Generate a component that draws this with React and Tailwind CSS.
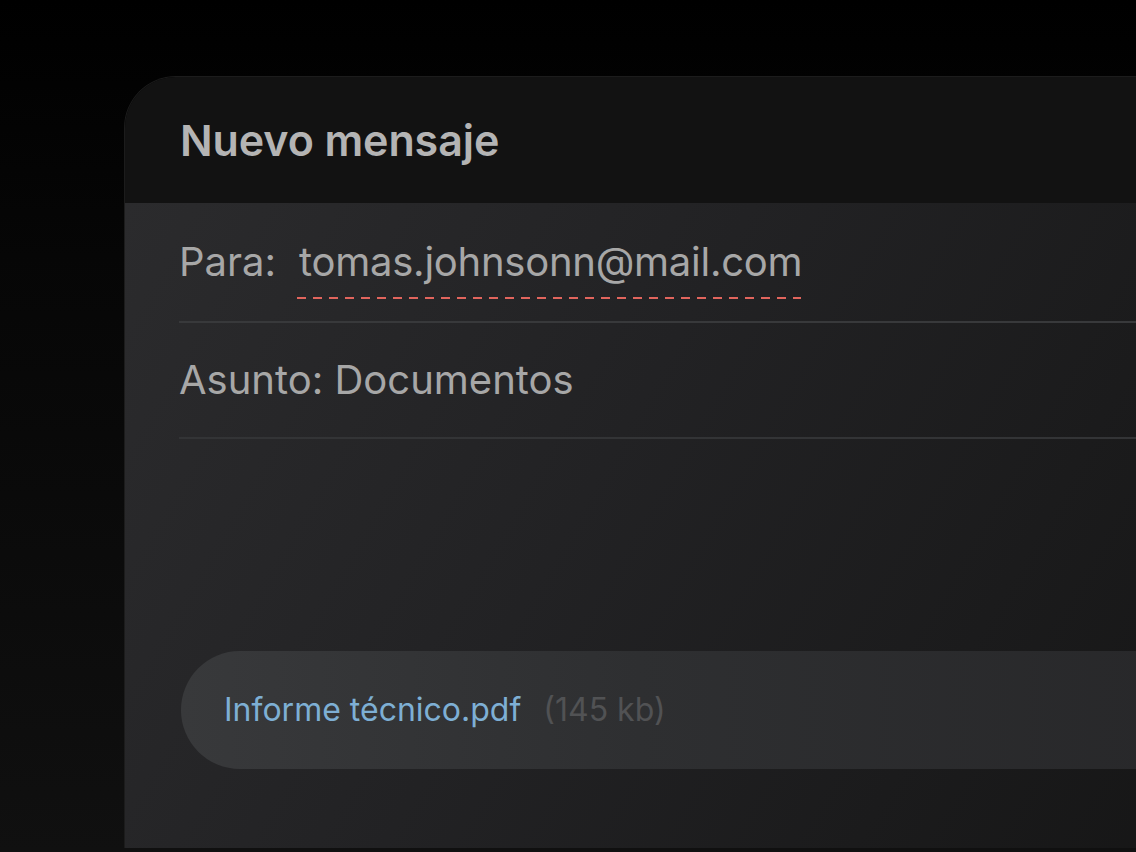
export default function App() {
  const font = { fontFamily: 'Inter, "Noto Sans", sans-serif' };
  return (
    <div
      className="w-full h-[852px] overflow-hidden bg-[linear-gradient(180deg,#000000_0%,#060606_30%,#101010_100%)] pt-[76px] pl-[124px]"
      style={font}
    >
      <div className="w-[1200px] h-[772px] rounded-tl-[52px] rounded-tr-[52px] overflow-hidden border-t border-l border-[#1c1c1c] flex flex-col">
        <div className="h-[126px] shrink-0 bg-[#121212] flex items-center pl-[55px]">
          <h1 className="text-[43px] font-semibold text-[#b4b4b4] tracking-[-0.1px] leading-none">
            Nuevo mensaje
          </h1>
        </div>
        <div className="flex-1 bg-[linear-gradient(120deg,#2b2b2d_0%,#222224_40%,#141414_100%)] pl-[56px] flex flex-col">
          <div className="h-[120px] flex items-center border-b-2 border-[#38393b] -ml-[2px]">
            <span className="text-[40px] text-[#a7a7a7] leading-none">Para:</span>
            <span className="ml-[23px] relative text-[40px] text-[#a7a7a7] leading-none tracking-[-0.25px]">
              tomas.johnsonn@mail.com
              <span className="absolute left-[-2px] right-[1px] bottom-[-17px] h-[2px] bg-[repeating-linear-gradient(90deg,#e1655d_0px,#e1655d_9px,transparent_9px,transparent_16px)]"></span>
            </span>
          </div>
          <div className="h-[116px] flex items-center border-b-2 border-[#333436] -ml-[2px]">
            <span className="text-[40px] text-[#a7a7a7] leading-none">Asunto: Documentos</span>
          </div>
          <div className="h-[212px]"></div>
          <div className="h-[118px] rounded-l-full bg-[linear-gradient(90deg,#38393b_0%,#2e2f31_40%,#262628_100%)] flex items-center pl-[43px]">
            <span className="text-[32px] text-[#7eafd4] leading-none">Informe técnico.pdf</span>
            <span className="ml-[22px] text-[32px] text-[#515254] leading-none">(145 kb)</span>
          </div>
        </div>
      </div>
    </div>
  );
}
